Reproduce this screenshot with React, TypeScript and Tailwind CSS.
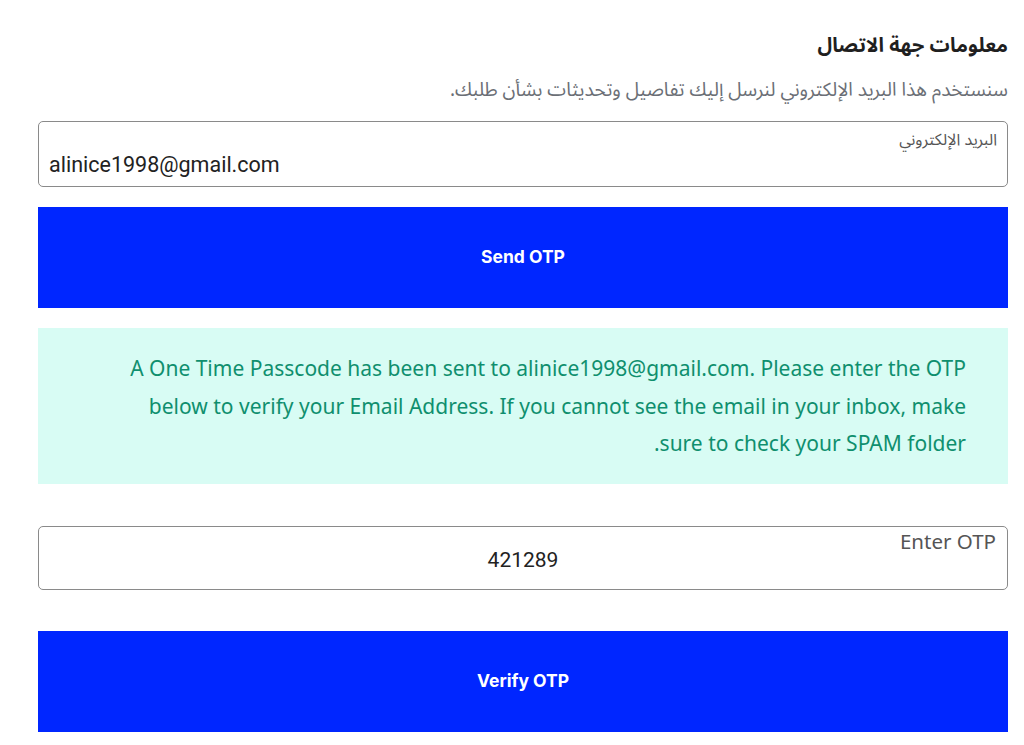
import React from "react";

export default function App() {
  return (
    <div dir="rtl" className="bg-white min-h-[745px] pl-[38px] pr-[16px] pt-[28px] flex flex-col">
      <h2 className="font-['Noto_Sans_Arabic','Noto_Sans','DejaVu_Sans',sans-serif] text-[20px] font-bold text-[#1f1f1f] leading-[34px] pt-[1px]">
        معلومات جهة الاتصال
      </h2>
      <p className="font-['Noto_Sans_Arabic','Noto_Sans','DejaVu_Sans',sans-serif] mt-[13px] text-[19px] text-[#6b6f76] leading-[28px]">
        سنستخدم هذا البريد الإلكتروني لنرسل إليك تفاصيل وتحديثات بشأن طلبك.
      </p>
      <div className="mt-[17px] h-[66px] border border-[#8a8a8a] rounded-[5px] flex flex-col px-[10px] pt-[7px]">
        <label className="font-['Noto_Sans_Arabic','Noto_Sans','DejaVu_Sans',sans-serif] text-[16px] text-[#555] leading-[22px]">
          البريد الإلكتروني
        </label>
        <div dir="ltr" className="font-['Roboto','Noto_Sans',sans-serif] text-[21.5px] text-[#222] leading-[28px] text-left">
          alinice1998@gmail.com
        </div>
      </div>
      <button className="font-['Inter','Noto_Sans',sans-serif] mt-[20px] h-[101px] bg-[#0026ff] text-white text-[17.5px] font-bold flex items-center justify-center">
        Send OTP
      </button>
      <div className="font-['Noto_Sans',sans-serif] mt-[20px] h-[156px] bg-[#d8fcf4] text-[#0f8f6e] text-[21px] leading-[37.5px] pr-[42px] pl-[20px] pt-[22px]">
        A One Time Passcode has been sent to alinice1998@gmail.com. Please enter the OTP
        <br />
        below to verify your Email Address. If you cannot see the email in your inbox, make
        <br />
        sure to check your SPAM folder.
      </div>
      <div className="mt-[42px] h-[64px] border border-[#8a8a8a] rounded-[5px] flex flex-col px-[11px] pt-[2px]">
        <label className="font-['Noto_Sans',sans-serif] text-[20.5px] text-[#555] leading-[24px]">Enter OTP</label>
        <div className="font-['Roboto','Noto_Sans',sans-serif] -mt-[6px] text-[21px] text-[#222] leading-[26px] text-center">
          421289
        </div>
      </div>
      <button className="font-['Inter','Noto_Sans',sans-serif] mt-[41px] h-[101px] bg-[#0026ff] text-white text-[17.5px] font-bold flex items-center justify-center">
        Verify OTP
      </button>
    </div>
  );
}
